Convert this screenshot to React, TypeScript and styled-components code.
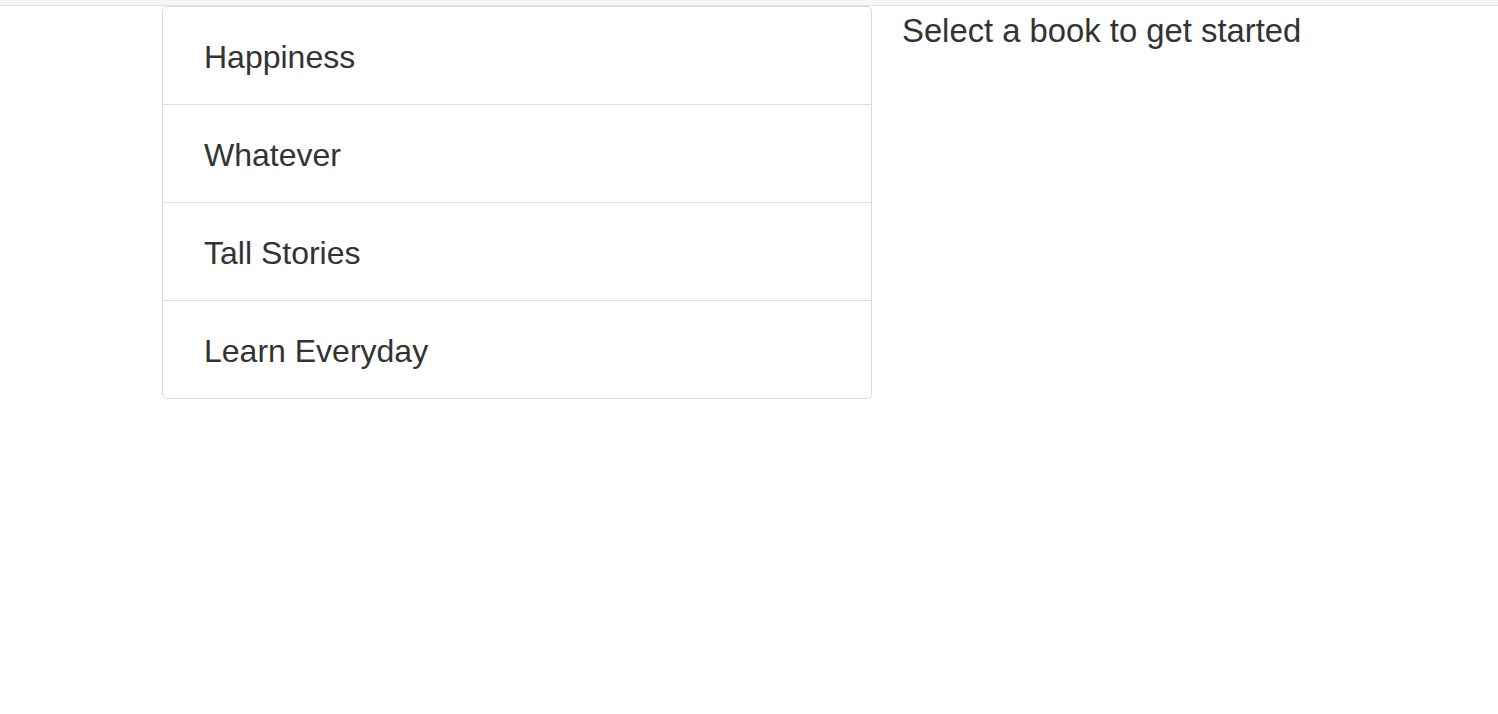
import React from "react";
import styled, { createGlobalStyle } from "styled-components";

const GlobalStyle = createGlobalStyle`
  html, body {
    margin: 0;
    padding: 0;
    background: #ffffff;
  }
  body {
    font-family: "Liberation Sans", Arial, Helvetica, sans-serif;
    color: #333333;
  }
`;

const TopBar = styled.div`
  height: 5px;
  background: #f5f5f5;
  border-bottom: 1px solid #e3e3e3;
`;

const Layout = styled.div`
  display: flex;
  align-items: flex-start;
  gap: 30px;
  padding-left: 162px;
`;

const BookList = styled.ul`
  list-style: none;
  margin: 0;
  padding: 0;
  width: 710px;
  box-sizing: border-box;
  border: 1px solid #d9d9d9;
  border-radius: 5px;
  background: #ffffff;
`;

const BookItem = styled.li`
  font-size: 32px;
  line-height: 37px;
  padding: 32px 40px 28px 41px;
  color: #333333;
  border-top: 1px solid #dddddd;
  cursor: pointer;

  &:first-child {
    border-top: none;
  }
`;

const Detail = styled.div`
  font-size: 32.8px;
  line-height: 37px;
  padding-top: 6px;
  color: #333333;
`;

const books = ["Happiness", "Whatever", "Tall Stories", "Learn Everyday"];

export default function App() {
  return (
    <>
      <GlobalStyle />
      <TopBar />
      <Layout>
        <BookList>
          {books.map((b) => (
            <BookItem key={b}>{b}</BookItem>
          ))}
        </BookList>
        <Detail>Select a book to get started</Detail>
      </Layout>
    </>
  );
}
